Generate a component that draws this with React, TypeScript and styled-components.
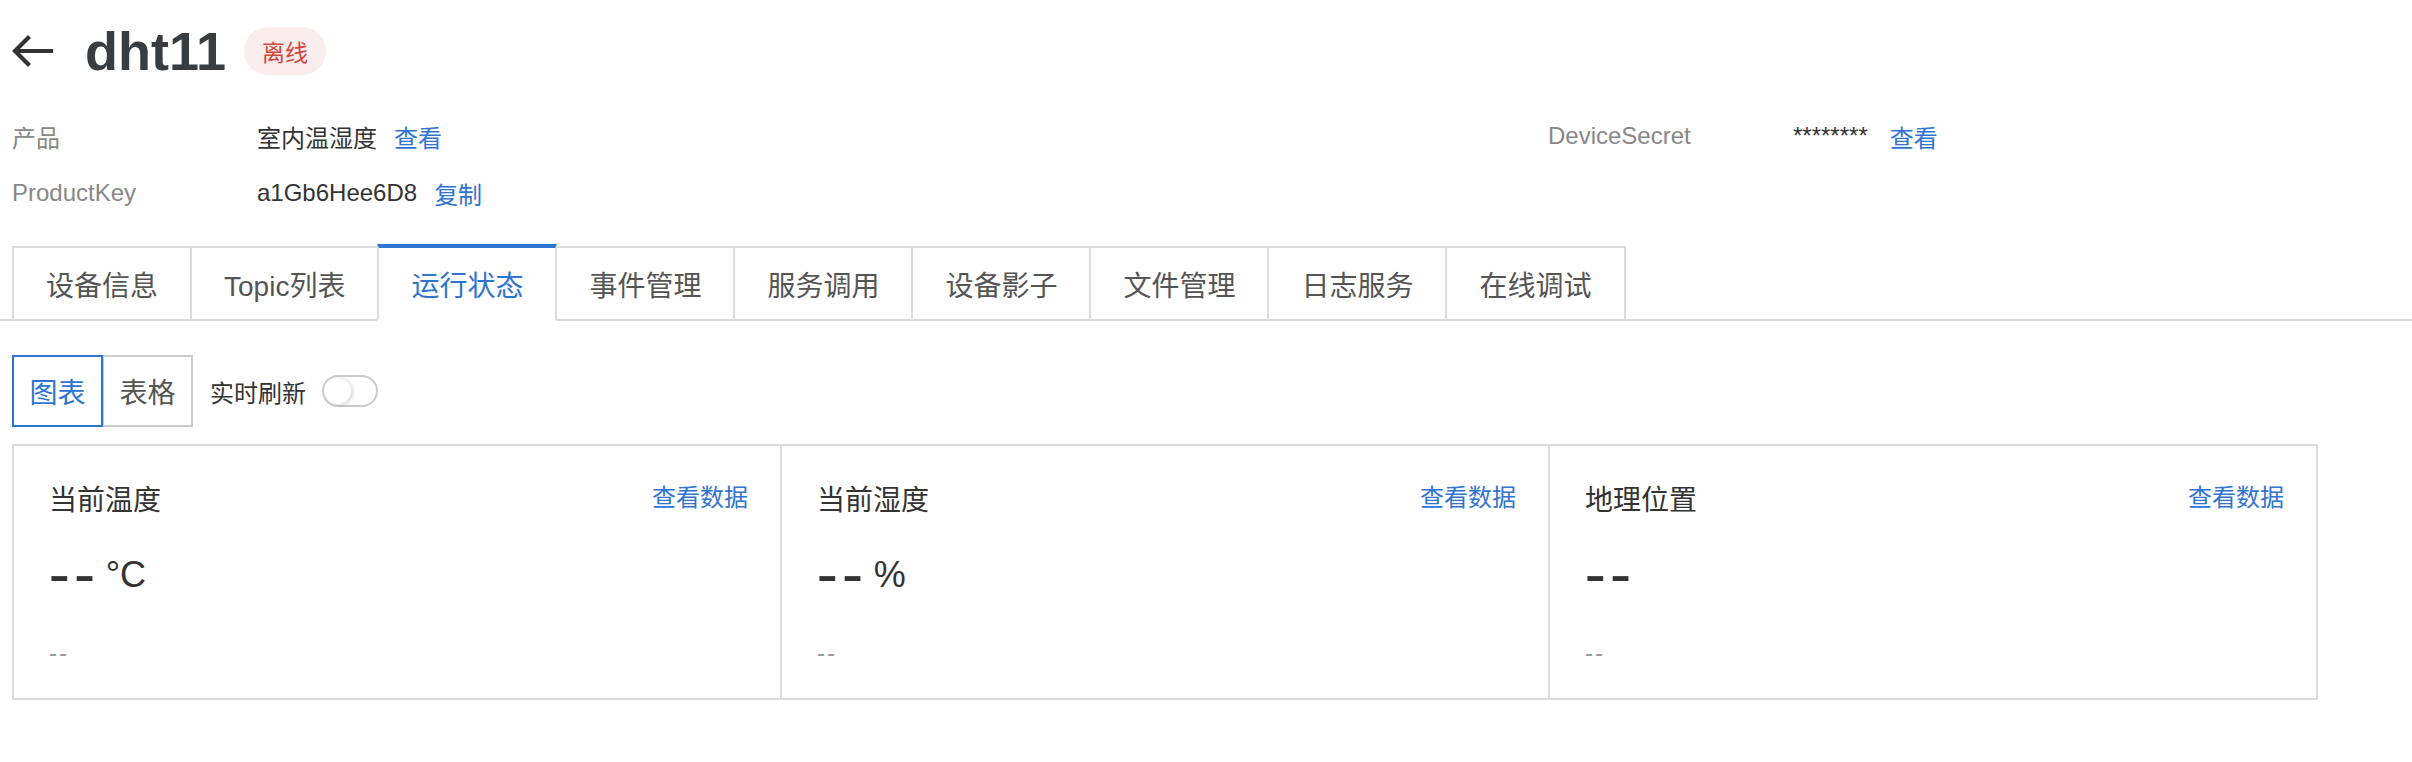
import React from "react";
import styled, { createGlobalStyle, css } from "styled-components";

const GlobalStyle = createGlobalStyle`
  html, body {
    margin: 0;
    padding: 0;
    background: #ffffff;
  }
  body {
    font-family: "Liberation Sans", "Noto Sans CJK SC", sans-serif;
    color: #333333;
  }
  * {
    box-sizing: border-box;
  }
`;

const BLUE = "#2f74d0";
const BORDER = "#dcdcdc";

const Page = styled.div`
  width: 2412px;
  padding-top: 20px;
  padding-bottom: 40px;
`;

const Header = styled.div`
  display: flex;
  align-items: center;
  height: 62px;
  padding-left: 12px;
`;

const BackButton = styled.button`
  display: flex;
  align-items: center;
  justify-content: center;
  width: 42px;
  height: 34px;
  padding: 0;
  margin-right: 31px;
  border: none;
  background: none;
  cursor: pointer;
`;

const Title = styled.h1`
  margin: 0;
  font-size: 54px;
  line-height: 62px;
  font-weight: 700;
  color: #373d41;
`;

const StatusBadge = styled.span`
  display: inline-flex;
  align-items: center;
  justify-content: center;
  height: 48px;
  padding: 0 18px;
  margin-left: 18px;
  border-radius: 24px;
  background: #fbeded;
  color: #d4463b;
  font-size: 23px;
`;

const InfoGrid = styled.div`
  display: grid;
  grid-template-columns: repeat(3, 768px);
  row-gap: 21px;
  margin-top: 36px;
  padding-left: 12px;
`;

const InfoItem = styled.div<{ col?: number }>`
  display: flex;
  align-items: center;
  height: 36px;
  font-size: 24px;
  ${({ col }) =>
    col
      ? css`
          grid-column: ${col};
        `
      : ""}
`;

const InfoLabel = styled.span`
  width: 245px;
  flex-shrink: 0;
  color: #888888;
`;

const InfoValue = styled.span`
  color: #333333;
`;

const TextLink = styled.a<{ wide?: boolean }>`
  margin-left: ${({ wide }) => (wide ? 22 : 17)}px;
  color: ${BLUE};
  text-decoration: none;
  cursor: pointer;
`;

const TabBar = styled.div`
  display: flex;
  margin-top: 35px;
  padding-left: 12px;
  border-bottom: 2px solid ${BORDER};
`;

const Tab = styled.div<{ active?: boolean }>`
  display: flex;
  align-items: center;
  justify-content: center;
  height: 75px;
  margin-bottom: -2px;
  margin-right: -2px;
  padding: 0 32px;
  font-size: 28px;
  color: #555555;
  background: #ffffff;
  border: 2px solid ${BORDER};
  cursor: pointer;
  ${({ active }) =>
    active &&
    css`
      position: relative;
      z-index: 1;
      color: ${BLUE};
      border-top: 4px solid ${BLUE};
      border-bottom-color: #ffffff;
      margin-top: -2px;
      height: 77px;
    `}
`;

const Toolbar = styled.div`
  display: flex;
  align-items: center;
  margin-top: 34px;
  padding-left: 12px;
`;

const Segmented = styled.div`
  display: flex;
`;

const SegmentButton = styled.button<{ active?: boolean }>`
  width: 91px;
  height: 72px;
  padding: 0;
  margin-right: -1px;
  font-family: inherit;
  font-size: 28px;
  background: #ffffff;
  cursor: pointer;
  color: ${({ active }) => (active ? BLUE : "#555555")};
  border: 2px solid ${({ active }) => (active ? BLUE : "#cccccc")};
  position: relative;
  z-index: ${({ active }) => (active ? 1 : 0)};
`;

const ToggleLabel = styled.span`
  margin-left: 18px;
  font-size: 24px;
  color: #333333;
`;

const Toggle = styled.div`
  position: relative;
  width: 56px;
  height: 32px;
  margin-left: 16px;
  border: 2px solid #c9cbce;
  border-radius: 16px;
  background: #ffffff;
`;

const ToggleKnob = styled.span`
  position: absolute;
  left: 1px;
  top: 1px;
  width: 26px;
  height: 26px;
  border-radius: 50%;
  background: #ffffff;
  box-shadow: 2px 1px 4px rgba(0, 0, 0, 0.16);
`;

const CardRow = styled.div`
  display: grid;
  grid-template-columns: repeat(3, 768px);
  margin-top: 17px;
  margin-left: 12px;
`;

const Card = styled.div`
  height: 256px;
  margin-right: -2px;
  padding: 32px 32px 28px 35px;
  border: 2px solid ${BORDER};
  display: flex;
  flex-direction: column;
`;

const CardHead = styled.div`
  display: flex;
  align-items: center;
  justify-content: space-between;
  height: 40px;
`;

const CardTitle = styled.span`
  font-size: 28px;
  color: #333333;
`;

const CardLink = styled.a`
  font-size: 24px;
  color: ${BLUE};
  cursor: pointer;
  margin-top: -6px;
`;

const CardValue = styled.div`
  display: flex;
  align-items: center;
  height: 50px;
  margin-top: 32px;
  font-size: 36px;
  color: #333333;
`;

const Dashes = styled.span`
  display: inline-block;
  font-size: 40px;
  font-weight: 700;
  letter-spacing: 3px;
  transform: scaleX(1.55);
  transform-origin: left center;
  margin-right: 24px;
`;

const CardSub = styled.div`
  height: 34px;
  margin-top: 36px;
  font-size: 24px;
  line-height: 34px;
  color: #999999;
  letter-spacing: 2px;
`;

const BackArrow = () => (
  <svg width="42" height="34" viewBox="0 0 42 34" fill="none">
    <path d="M41 17H4M17.5 2.5L3 17l14.5 14.5" stroke="#333333" strokeWidth="4.2" strokeLinecap="butt" strokeLinejoin="miter" />
  </svg>
);

const tabs = ["设备信息", "Topic列表", "运行状态", "事件管理", "服务调用", "设备影子", "文件管理", "日志服务", "在线调试"];

const cards = [
  { title: "当前温度", unit: "°C" },
  { title: "当前湿度", unit: "%" },
  { title: "地理位置", unit: "" },
];

export default function App() {
  return (
    <>
      <GlobalStyle />
      <Page>
        <Header>
          <BackButton aria-label="返回">
            <BackArrow />
          </BackButton>
          <Title>dht11</Title>
          <StatusBadge>离线</StatusBadge>
        </Header>

        <InfoGrid>
          <InfoItem>
            <InfoLabel>产品</InfoLabel>
            <InfoValue>室内温湿度</InfoValue>
            <TextLink>查看</TextLink>
          </InfoItem>
          <InfoItem col={3}>
            <InfoLabel>DeviceSecret</InfoLabel>
            <InfoValue>********</InfoValue>
            <TextLink wide>查看</TextLink>
          </InfoItem>
          <InfoItem col={1}>
            <InfoLabel>ProductKey</InfoLabel>
            <InfoValue>a1Gb6Hee6D8</InfoValue>
            <TextLink>复制</TextLink>
          </InfoItem>
        </InfoGrid>

        <TabBar>
          {tabs.map((t) => (
            <Tab key={t} active={t === "运行状态"}>
              {t}
            </Tab>
          ))}
        </TabBar>

        <Toolbar>
          <Segmented>
            <SegmentButton active>图表</SegmentButton>
            <SegmentButton>表格</SegmentButton>
          </Segmented>
          <ToggleLabel>实时刷新</ToggleLabel>
          <Toggle>
            <ToggleKnob />
          </Toggle>
        </Toolbar>

        <CardRow>
          {cards.map((c) => (
            <Card key={c.title}>
              <CardHead>
                <CardTitle>{c.title}</CardTitle>
                <CardLink>查看数据</CardLink>
              </CardHead>
              <CardValue>
                <Dashes>--</Dashes>
                {c.unit}
              </CardValue>
              <CardSub>--</CardSub>
            </Card>
          ))}
        </CardRow>
      </Page>
    </>
  );
}
